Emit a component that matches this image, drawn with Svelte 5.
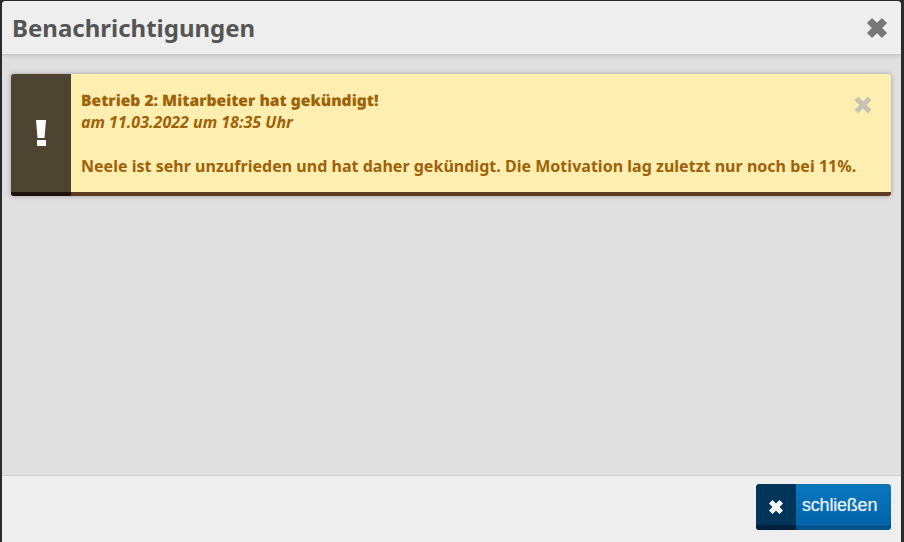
<script>
  const title = 'Benachrichtigungen'
</script>

<div class="modal">
  <header>
    <h1>{title}</h1>
    <svg class="x big" viewBox="0 0 20 20"><path d="M3.500 6.500 6.500 3.500 10 7 13.500 3.500 16.500 6.500 13 10 16.500 13.500 13.500 16.500 10 13 6.500 16.500 3.500 13.500 7 10Z"/></svg>
  </header>

  <main>
    <div class="alert">
      <div class="side"><span class="bang"></span><span class="dot"></span></div>
      <div class="msg">
        <svg class="x small" viewBox="0 0 20 20"><path d="M3 6 6 3 10 7 14 3 17 6 13 10 17 14 14 17 10 13 6 17 3 14 7 10Z"/></svg>
        <strong>Betrieb 2: Mitarbeiter hat gekündigt!</strong>
        <em>am 11.03.2022 um 18:35 Uhr</em>
        <p>Neele ist sehr unzufrieden und hat daher gekündigt. Die Motivation lag zuletzt nur noch bei 11%.</p>
      </div>
    </div>
  </main>

  <footer>
    <button>
      <span class="ico"><svg viewBox="0 0 20 20"><path d="M3 6.500 6.500 3 10 6.500 13.500 3 17 6.500 13.500 10 17 13.500 13.500 17 10 13.500 6.500 17 3 13.500 6.500 10Z"/></svg></span>
      <span class="lbl">schließen</span>
    </button>
  </footer>
</div>

<style>
  :global(body){
    background: #2b2b2b;
    overflow: hidden;
  }

  .modal{
    box-sizing: border-box;
    width: 899px;
    height: 541px;
    margin: 1px 0 0 2px;
    display: flex;
    flex-direction: column;
    background: #e0e0e0;
    border-radius: 4px 4px 0 0;
    font-family: "Noto Sans", sans-serif;
    overflow: hidden;
  }

  header{
    height: 54px;
    flex: none;
    box-sizing: border-box;
    display: flex;
    align-items: center;
    justify-content: space-between;
    padding: 0 10px;
    background: #eeeeee;
    border-bottom: 1px solid #c8c8c8;
    box-shadow: 0 1px 4px rgba(0,0,0,.12);
  }

  h1{
    margin: 0;
    font-size: 24px;
    font-weight: 700;
    color: #555;
  }

  .x.big{
    width: 28px;
    height: 28px;
    fill: #777;
    stroke: #777;
    stroke-width: 1;
    stroke-linejoin: round;
  }

  main{
    flex: 1;
    padding: 19px 10px 0 9px;
  }

  .alert{
    display: flex;
    height: 122px;
    box-sizing: border-box;
    border-bottom: 4px solid #5e3a20;
    border-radius: 3px;
    box-shadow: 0 0 5px rgba(0,0,0,.3);
    background: #feeeb0;
  }

  .side{
    width: 60px;
    flex: none;
    box-sizing: border-box;
    margin-bottom: -4px;
    padding-bottom: 4px;
    background: linear-gradient(#4d4531 118px, #1e140d 118px);
    border-radius: 3px 0 0 3px;
    display: flex;
    flex-direction: column;
    align-items: center;
    justify-content: center;
    gap: 2px;
  }

  .bang{
    width: 10px;
    height: 18px;
    background: #fff;
    clip-path: polygon(0 0, 100% 0, 85% 100%, 15% 100%);
  }

  .dot{
    width: 9px;
    height: 6px;
    background: #fff;
  }

  .msg{
    position: relative;
    flex: 1;
    padding: 15px 10px 0 10px;
    font-size: 16px;
    line-height: 22px;
    font-weight: 700;
    color: #9e6208;
  }

  .msg strong, .msg em{
    display: block;
  }

  .msg strong{
    font-size: 15.6px;
    text-rendering: geometricPrecision;
  }

  .msg p{
    margin: 22px 0 0;
    letter-spacing: .02px;
  }

  .x.small{
    position: absolute;
    top: 19px;
    right: 16px;
    width: 24px;
    height: 24px;
    fill: #c6c3b4;
  }

  footer{
    height: 67px;
    flex: none;
    box-sizing: border-box;
    display: flex;
    align-items: flex-start;
    justify-content: flex-end;
    padding: 8px 10px 0 0;
    background: #eeeeee;
    border-top: 1px solid #cfcfcf;
  }

  button{
    display: flex;
    width: 135px;
    height: 46px;
    padding: 0;
    border: none;
    border-radius: 4px;
    overflow: hidden;
    background: linear-gradient(#0a78be, #0060a5);
    box-shadow: inset 0 1px 0 #1a6ea6, inset 0 -5px 0 #00528e, inset 0 -6px 0 #0a6cae;
  }

  .ico{
    width: 40px;
    height: 100%;
    display: flex;
    align-items: center;
    justify-content: center;
    background: #01365a;
    box-shadow: inset 0 -5px 0 #001f38;
  }

  .ico svg{
    width: 20px;
    height: 20px;
    fill: #fff;
  }

  .lbl{
    flex: 1;
    padding-left: 6px;
    font-family: "Liberation Sans", Arial, sans-serif;
    font-size: 18px;
    letter-spacing: -.2px;
    line-height: 42px;
    color: #e6f2fa;
    text-align: left;
    text-shadow: 0 0 1px rgba(230,242,250,.6);
  }
</style>
